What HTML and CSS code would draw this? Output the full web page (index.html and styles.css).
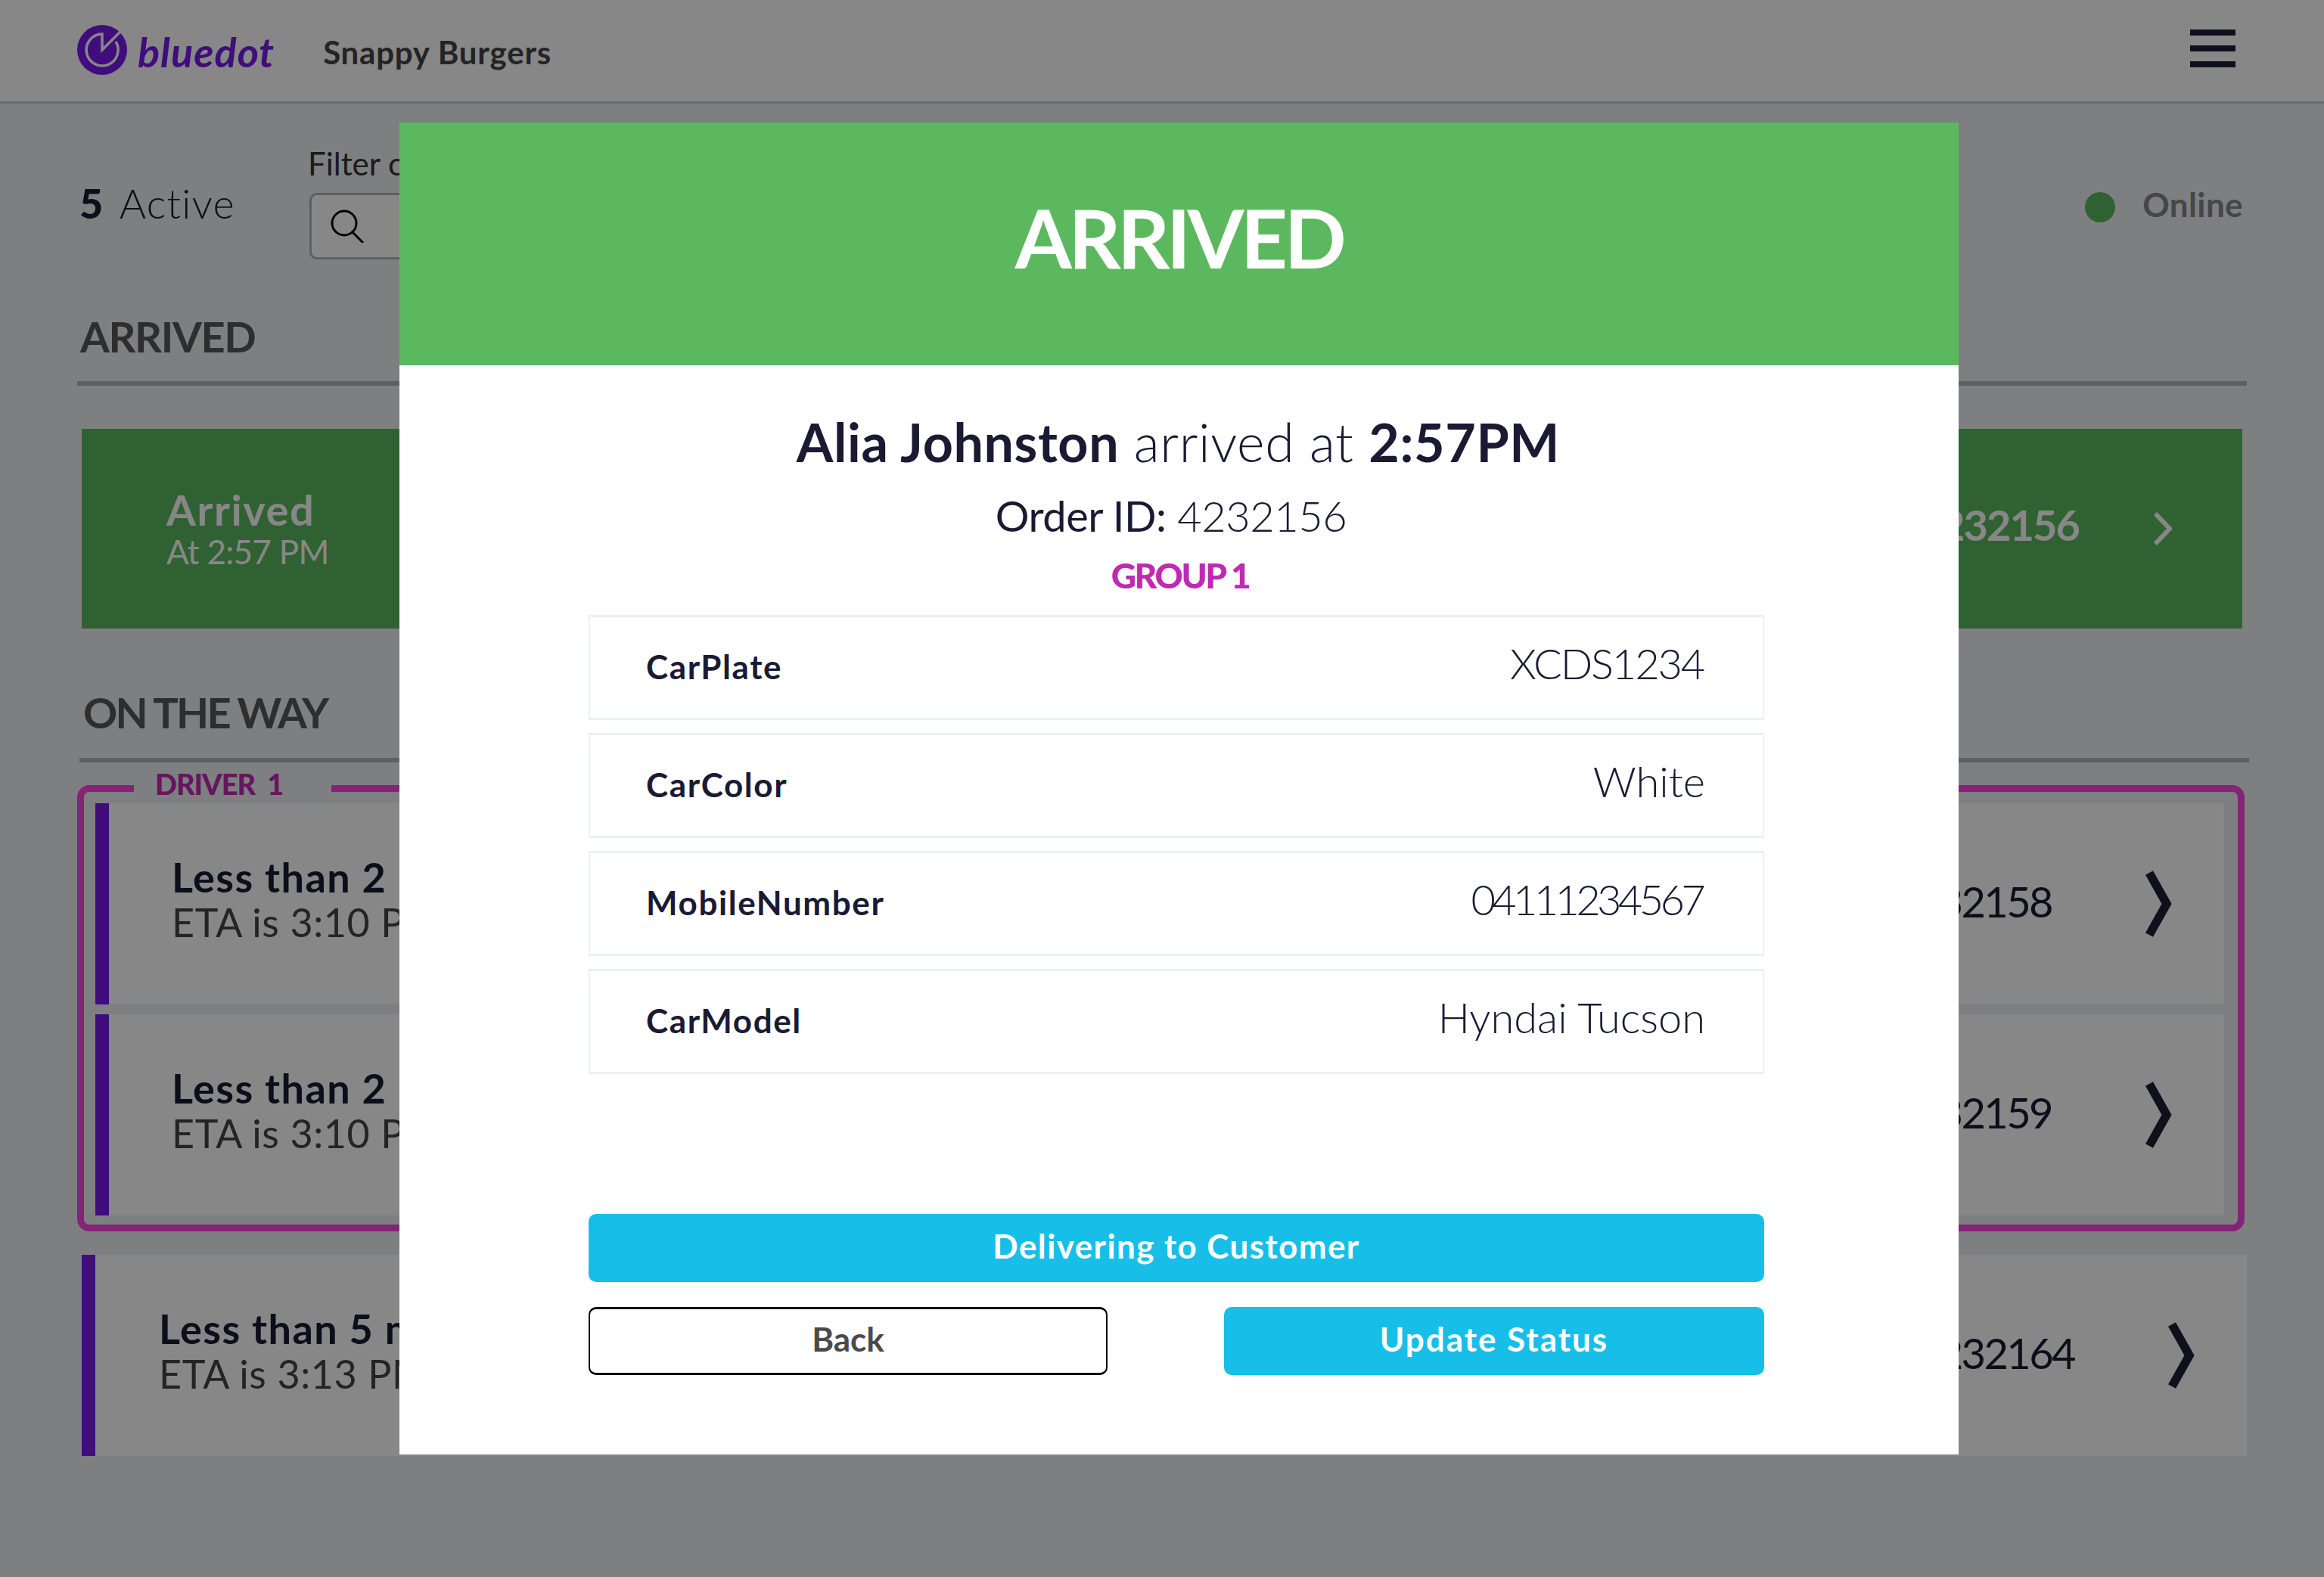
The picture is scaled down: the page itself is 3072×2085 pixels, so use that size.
FILE: index.html
```html
<!DOCTYPE html>
<html lang="en">
<head>
    <meta charset="UTF-8">
    <meta name="viewport" content="width=device-width, initial-scale=1.0">
    <title>Bluedot Orders</title>
    <link rel="stylesheet" href="styles.css">
</head>
<body>

    <header class="topbar">
        <svg class="logo-mark" viewBox="0 0 66 66">
            <circle cx="33" cy="33" r="33" fill="#781aeb"/>
            <path d="M58 8L33 33V12A21 21 0 1 0 51 22" fill="none" stroke="#fff" stroke-width="3.5"/>
        </svg>
        <span class="logo-text">bluedot</span>
        <span class="store-name">Snappy Burgers</span>
        <div class="hamburger"><span></span><span></span><span></span></div>
    </header>

    <div class="toolbar">
        <div class="active-count"><b>5</b> Active</div>
        <div class="filter">
            <label>Filter orders</label>
            <div class="search-box">
                <svg class="search-icon" viewBox="0 0 44 44">
                    <circle cx="18" cy="18" r="16" fill="none" stroke="#000" stroke-width="3"/>
                    <path d="M29 30L43 44" fill="none" stroke="#000" stroke-width="3"/>
                </svg>
            </div>
        </div>
        <div class="status"><span class="status-dot"></span>Online</div>
    </div>

    <h3 class="section-title">ARRIVED</h3>
    <div class="arrived-card">
        <div>
            <div class="card-main">Arrived</div>
            <div class="card-sub">At 2:57 PM</div>
        </div>
        <div class="card-order">Order ID: 4232156</div>
        <svg class="chevron-small" viewBox="0 0 24 44"><path d="M2 2L21 22L2 42"/></svg>
    </div>

    <h3 class="section-title way-title">ON THE WAY</h3>
    <div class="driver-group">
        <div class="driver-label">DRIVER 1</div>
        <div class="order-card">
            <div class="card-text">
                <div class="card-main">Less than 2 min</div>
                <div class="card-sub">ETA is 3:10 PM</div>
            </div>
            <div class="card-order">Order ID: 4232158</div>
            <svg class="chevron" viewBox="0 0 36 92"><path d="M5 5L28 46L5 87"/></svg>
        </div>
        <div class="order-card">
            <div class="card-text">
                <div class="card-main">Less than 2 min</div>
                <div class="card-sub">ETA is 3:10 PM</div>
            </div>
            <div class="card-order">Order ID: 4232159</div>
            <svg class="chevron" viewBox="0 0 36 92"><path d="M5 5L28 46L5 87"/></svg>
        </div>
    </div>
    <div class="order-card single">
        <div class="card-text">
            <div class="card-main">Less than 5 min</div>
            <div class="card-sub">ETA is 3:13 PM</div>
        </div>
        <div class="card-order">Order ID: 4232164</div>
        <svg class="chevron" viewBox="0 0 36 92"><path d="M5 5L28 46L5 87"/></svg>
    </div>

    <div class="scrim"></div>

    <div class="modal">
        <div class="modal-head">ARRIVED</div>
        <div class="modal-body">
            <div class="arrived-line"><b>Alia Johnston</b> arrived at <b>2:57PM</b></div>
            <div class="order-line"><span>Order ID:</span> 4232156</div>
            <div class="group-line">GROUP 1</div>
            <div class="info-row"><b>CarPlate</b><span class="plate">XCDS1234</span></div>
            <div class="info-row"><b>CarColor</b><span>White</span></div>
            <div class="info-row"><b>MobileNumber</b><span class="phone">04111234567</span></div>
            <div class="info-row"><b>CarModel</b><span>Hyndai Tucson</span></div>
            <button class="btn btn-wide">Delivering to Customer</button>
            <div class="btn-row">
                <button class="btn btn-back">Back</button>
                <button class="btn btn-update">Update Status</button>
            </div>
        </div>
    </div>

</body>
</html>
```
FILE: styles.css
```css
* {
    box-sizing: border-box;
}
html, body {
    margin: 0;
    padding: 0;
}
body {
    width: 3072px;
    height: 2085px;
    overflow: hidden;
    position: relative;
    font-family: Lato, "Open Sans", sans-serif;
    background-color: #eef0f3;
    color: #1a1a33;
}

/* top bar */
.topbar {
    height: 137px;
    display: flex;
    align-items: center;
    padding: 0 117px 0 102px;
    background: #fff;
    border-bottom: 3px solid #cfcfcf;
}
.logo-mark {
    width: 66px;
    height: 66px;
    margin-top: -2px;
}
.logo-text {
    margin: 3px 0 0 14px;
    font-size: 54px;
    font-style: italic;
    font-weight: 700;
    letter-spacing: 1px;
    color: #781aeb;
}
.store-name {
    margin-left: 64px;
    margin-top: 3px;
    font-size: 42px;
    font-weight: 700;
    letter-spacing: 0.8px;
    color: #444;
}
.hamburger {
    margin-left: auto;
    width: 60px;
    display: flex;
    flex-direction: column;
    gap: 13px;
    margin-top: -6px;
}
.hamburger span {
    height: 8px;
    background: #1f1f38;
}

/* active count + filter */
.toolbar {
    height: 266px;
    position: relative;
    display: flex;
    padding: 0 107px;
}
.active-count {
    margin: 99px 0 0 -2px;
    width: 304px;
    font-size: 54px;
    font-weight: 300;
    letter-spacing: 1.3px;
}
.active-count b {
    font-weight: 900;
    margin-right: 6px;
}
.filter {
    margin-top: 56px;
}
.filter label {
    display: block;
    margin-left: -2px;
    font-size: 42px;
    font-weight: 400;
    color: #333;
    line-height: 46px;
}
.search-box {
    margin-top: 16px;
    width: 500px;
    height: 88px;
    padding: 19px 25px;
    border: 3px solid #b3b3b3;
    border-radius: 10px;
    background: #fff;
}
.search-icon {
    width: 44px;
    height: 44px;
    display: block;
}
.status {
    margin-left: auto;
    margin-top: 103px;
    height: 60px;
    display: flex;
    align-items: center;
    font-size: 44px;
    font-weight: 700;
    letter-spacing: 0.4px;
    color: #83858c;
}
.status-dot {
    width: 40px;
    height: 40px;
    margin: 8px 36px 0 0;
    border-radius: 50%;
    background: #5cb85f;
}

/* section headings */
.section-title {
    margin: 0 102px;
    width: 2868px;
    height: 107px;
    padding: 8px 4px 0;
    font-size: 56px;
    font-weight: 700;
    letter-spacing: -1.4px;
    line-height: 68px;
    color: #575757;
    border-bottom: 6px solid #b3b3b3;
}
.way-title {
    margin: 91px 0 0 105px;
    height: 86px;
    padding: 0 5px;
    line-height: 40px;
    letter-spacing: -2.7px;
}

/* cards */
.arrived-card {
    margin: 57px 0 0 108px;
    width: 2856px;
    height: 264px;
    display: flex;
    align-items: center;
    padding: 0 93px 0 112px;
    background: #5cb85f;
    color: #fff;
}
.arrived-card .card-main {
    font-size: 56px;
    line-height: 60px;
    letter-spacing: 1.6px;
}
.arrived-card .card-sub {
    font-size: 44px;
    line-height: 50px;
    letter-spacing: -0.7px;
    color: #fff;
}
.arrived-card .card-order {
    font-weight: 700;
    margin-right: 99px;
    padding-bottom: 12px;
    letter-spacing: -2px;
    color: #fff;
}
.chevron-small {
    width: 24px;
    height: 44px;
}
.chevron-small path {
    fill: none;
    stroke: #fff;
    stroke-width: 6;
}
.card-text {
    padding-bottom: 10px;
}
.card-main {
    font-size: 54px;
    font-weight: 700;
    line-height: 58px;
    letter-spacing: 1.4px;
}
.card-sub {
    font-size: 52px;
    line-height: 60px;
    letter-spacing: 0.6px;
    color: #444;
}
.card-order {
    margin-left: auto;
    margin-right: 124px;
    padding-bottom: 8px;
    font-size: 56px;
    letter-spacing: -2.6px;
}
.chevron {
    width: 36px;
    height: 92px;
    flex: none;
}
.chevron path {
    fill: none;
    stroke: #1f1f38;
    stroke-width: 11.5;
}
.driver-group {
    position: relative;
    margin: 30px 0 0 102px;
    width: 2865px;
    height: 590px;
    padding: 15px 18px 0 15px;
    border: 9px solid #f744df;
    border-radius: 16px;
    display: flex;
    flex-direction: column;
    gap: 13px;
}
.driver-label {
    position: absolute;
    top: -31px;
    left: 66px;
    width: 261px;
    height: 40px;
    padding-left: 28px;
    font-size: 38px;
    font-weight: 900;
    letter-spacing: -1px;
    word-spacing: 8px;
    line-height: 40px;
    color: #c02ab2;
    background: #eef0f3;
}
.order-card {
    height: 266px;
    display: flex;
    align-items: center;
    padding: 0 68px 0 83px;
    background: #fff;
    border-left: 18px solid #781aeb;
}
.single {
    margin: 31px 0 0 108px;
    width: 2862px;
    padding-left: 84px;
}

/* scrim and modal */
.scrim {
    position: absolute;
    inset: 0;
    background: rgba(0, 0, 0, 0.47);
}
.modal {
    position: absolute;
    top: 162px;
    left: 528px;
    width: 2061px;
    height: 1761px;
    background: #fff;
}
.modal-head {
    height: 321px;
    padding-bottom: 20px;
    display: flex;
    align-items: center;
    justify-content: center;
    font-size: 108px;
    font-weight: 700;
    letter-spacing: -4.5px;
    color: #fff;
    background: #5cb85f;
}
.modal-body {
    padding: 61px 257px 0 250px;
}
.arrived-line {
    margin-left: 5px;
    font-size: 70px;
    line-height: 80px;
    font-weight: 300;
    letter-spacing: 0.6px;
    text-align: center;
}
.arrived-line b, .info-row b {
    font-weight: 700;
}
.order-line {
    margin: 24px 14px 0 0;
    font-size: 56px;
    line-height: 68px;
    font-weight: 300;
    letter-spacing: -0.5px;
    text-align: center;
}
.order-line span {
    font-weight: 400;
}
.group-line {
    margin: 17px 0 24px 10px;
    font-size: 46px;
    line-height: 56px;
    font-weight: 900;
    letter-spacing: -2.4px;
    color: #c02ab2;
    text-align: center;
}
.info-row {
    height: 139px;
    margin-bottom: 17px;
    display: flex;
    align-items: center;
    justify-content: space-between;
    padding: 0 76px 4px 74px;
    border: 3px solid #ecf0f4;
    border-left-width: 2px;
    border-right-width: 2px;
}
.info-row b {
    font-size: 44px;
    letter-spacing: 1.6px;
}
.info-row span {
    padding-bottom: 8px;
    font-size: 56px;
    font-weight: 300;
}
.info-row .plate {
    margin-right: 2px;
    letter-spacing: -2.2px;
}
.info-row .phone {
    margin-right: 4px;
    letter-spacing: -4.7px;
}
.btn {
    display: block;
    height: 90px;
    padding: 0 0 6px;
    border: none;
    border-radius: 10px;
    font-family: Lato, "Open Sans", sans-serif;
    font-size: 44px;
    font-weight: 700;
    color: #fff;
    background: #17bfe8;
}
.btn-wide {
    width: 100%;
    margin-top: 185px;
    letter-spacing: 1.4px;
}
.btn-row {
    display: flex;
    justify-content: space-between;
    margin-top: 33px;
}
.btn-back {
    width: 686px;
    background: #fff;
    color: #4a4a4a;
    border: 3px solid #000;
    border-left-width: 2px;
    border-right-width: 2px;
}
.btn-update {
    width: 714px;
    letter-spacing: 2px;
}
```
